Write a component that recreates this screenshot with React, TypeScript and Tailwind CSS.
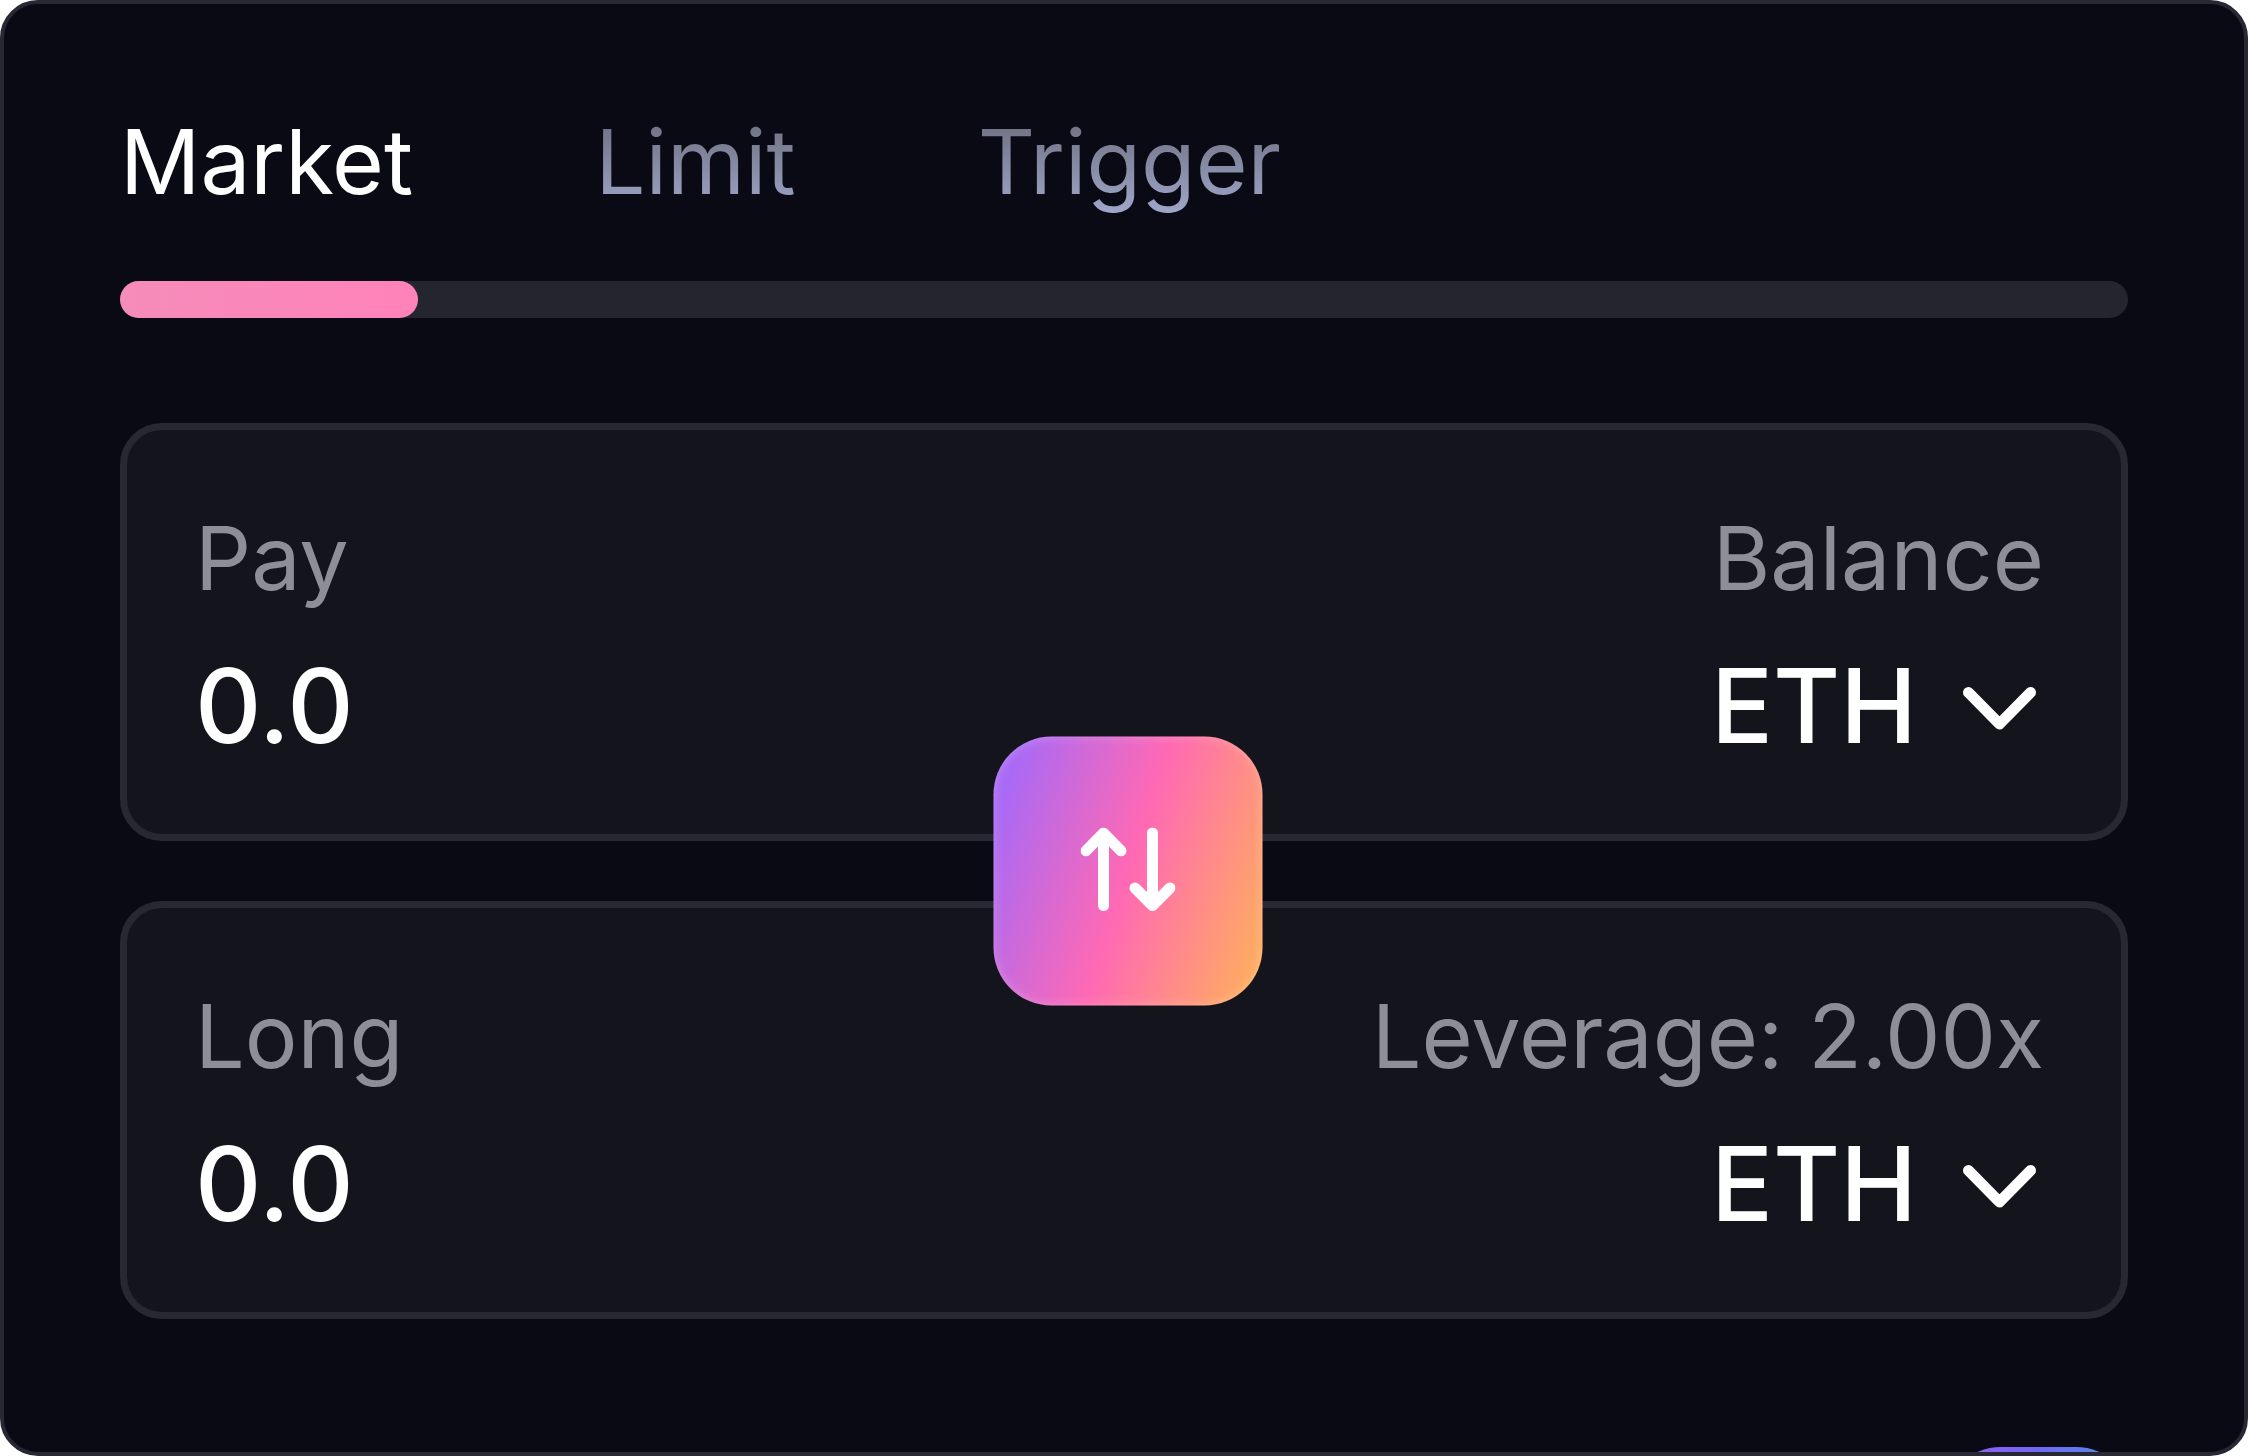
import {useState} from "react";

const tabs = ["Market", "Limit", "Trigger"];

const tokens = ["ETH"];

const ChevronIcon = () => (
    <svg
        className="pointer-events-none absolute top-[45px] right-0 h-[43px] w-[73px]"
        viewBox="0 0 73 43"
        fill="none"
        stroke="currentColor"
        strokeWidth="11"
        strokeLinecap="round"
        strokeLinejoin="round"
        aria-hidden="true"
    >
        <path d="M5.5 5.5 36.5 37 67.5 5.5"/>
    </svg>
);

const SwapIcon = () => (
    <svg
        className="h-[84px] w-[95px]"
        viewBox="0 0 95 84"
        fill="none"
        stroke="currentColor"
        strokeWidth="11"
        strokeLinecap="round"
        strokeLinejoin="round"
        aria-hidden="true"
    >
        <path d="M23 78V5.5M5.5 23.3 23 5.5 40.5 23.3"/>
        <path d="M72 5.5V78M54.5 60.5 72 78 89.5 60.5"/>
    </svg>
);

type FieldProps = {
    id: string;
    label: string;
    info: string;
};

const Field = ({id, label, info}: FieldProps) => {
    const [amount, setAmount] = useState("0.0");

    return (
        <div className="flex justify-between rounded-[42px] border-[7px] border-[#282832] bg-[#14141d] pt-[74px] pr-[77px] pb-[65px] pl-[68px]">
            <div className="flex min-w-0 flex-1 flex-col gap-[30px]">
                <label htmlFor={id} className="text-[88px] leading-[108px] text-[#8e8e96]">
                    {label}
                </label>
                <input
                    id={id}
                    inputMode="decimal"
                    value={amount}
                    onChange={(e) => setAmount(e.target.value)}
                    className="h-[127px] w-full bg-transparent text-[103px] leading-[127px] font-medium text-white outline-none"
                />
            </div>
            <div className="flex flex-col items-end gap-[30px]">
                <label htmlFor={`${id}-token`} className="text-[88px] leading-[108px] text-[#8e8e96]">
                    {info}
                </label>
                <div className="relative mr-2 text-white">
                    <select
                        id={`${id}-token`}
                        className="block h-[127px] appearance-none bg-transparent pr-[118px] text-[103px] leading-[127px] font-medium outline-none"
                    >
                        {tokens.map((token) => (
                            <option key={token}>{token}</option>
                        ))}
                    </select>
                    <ChevronIcon/>
                </div>
            </div>
        </div>
    );
};

export default function App() {
    const [active, setActive] = useState("Market");

    return (
        <div className="min-h-screen bg-white font-['Inter',sans-serif]">
            <main className="relative min-h-screen overflow-hidden rounded-[38px] border-4 border-[#282834] bg-[#0a0a14] px-[116px] pt-[104px]">
                <div role="tablist" className="flex gap-[182px]">
                    {tabs.map((tab) => (
                        <button
                            key={tab}
                            role="tab"
                            aria-selected={tab === active}
                            onClick={() => setActive(tab)}
                            className={
                                tab === active
                                    ? "text-[89px] leading-[108px] text-white"
                                    : "bg-linear-to-b from-[#696a78] to-[#a0a8cc] bg-clip-text text-[89px] leading-[108px] text-transparent"
                            }
                        >
                            {tab}
                        </button>
                    ))}
                </div>

                <div className="mt-[65px] h-[37px] rounded-full bg-[#252530]">
                    <div className="h-full w-[298px] rounded-full bg-linear-to-r from-[#f58cba] to-[#ff82b9]"/>
                </div>

                <div className="relative mt-[105px] flex flex-col gap-[60px]">
                    <Field id="pay" label="Pay" info="Balance"/>
                    <Field id="long" label="Long" info="Leverage: 2.00x"/>
                    <button
                        aria-label="Swap"
                        className="absolute top-1/2 left-[calc(50%+4px)] flex size-[269px] -translate-1/2 items-center justify-center rounded-[58px] bg-[linear-gradient(108deg,#a969f5_8%,#ff69b4_50%,#ffac60_95%)] pb-[3px] text-white shadow-[inset_0_0_12px_rgba(255,255,255,0.25)]"
                    >
                        <SwapIcon/>
                    </button>
                </div>

                {/* top edge of the floating action, cut off by the panel */}
                <div className="absolute top-[calc(100%-5px)] right-[110px] h-[191px] w-[191px] rounded-[58px] bg-linear-to-r from-[#9a5cf0] via-[#7068f5] to-[#4a90e2]"/>
            </main>
        </div>
    );
}
